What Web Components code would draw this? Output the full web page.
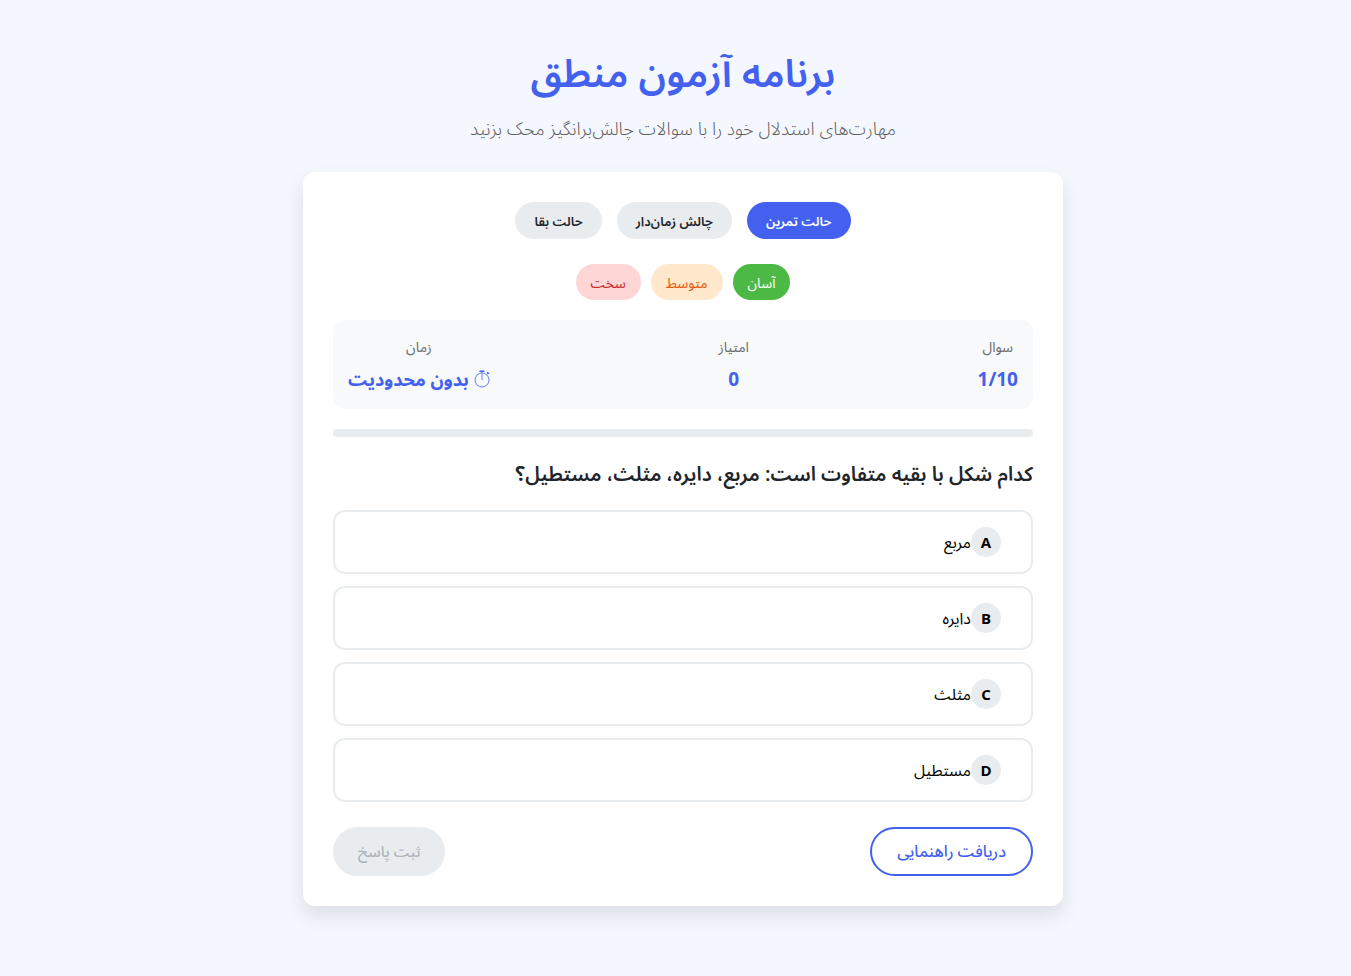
<!DOCTYPE html>
<html lang="fa" dir="rtl">
<head>
<meta charset="UTF-8">
<meta name="viewport" content="width=device-width, initial-scale=1.0">
<title>برنامه آزمون منطق</title>
<style>
  body {
    margin: 0;
    padding-left: 15px;
    min-height: 100vh;
    box-sizing: border-box;
    background-color: #f5f7ff;
    color: #212529;
    font-family: "Open Sans", "Noto Sans Arabic", "Noto Sans", "DejaVu Sans", sans-serif;
    font-size: 16px;
  }
</style>
</head>
<body>

<quiz-app>
  <quiz-header slot="header">
    <span slot="title">برنامه آزمون منطق</span>
    <span slot="subtitle">مهارت‌های استدلال خود را با سوالات چالش‌برانگیز محک بزنید</span>
  </quiz-header>

  <pill-group variant="modes">
    <pill-button variant="mode" active>حالت تمرین</pill-button>
    <pill-button variant="mode">چالش زمان‌دار</pill-button>
    <pill-button variant="mode">حالت بقا</pill-button>
  </pill-group>

  <pill-group variant="levels">
    <pill-button variant="easy">آسان</pill-button>
    <pill-button variant="medium">متوسط</pill-button>
    <pill-button variant="hard">سخت</pill-button>
  </pill-group>

  <quiz-stats>
    <stat-item label="سوال">1/10</stat-item>
    <stat-item label="امتیاز">0</stat-item>
    <stat-item label="زمان" timer>بدون محدودیت</stat-item>
  </quiz-stats>

  <quiz-progress value="0"></quiz-progress>

  <quiz-question>
    <span slot="question">کدام شکل با بقیه متفاوت است: مربع، دایره، مثلث، مستطیل؟</span>
    <quiz-option letter="A">مربع</quiz-option>
    <quiz-option letter="B">دایره</quiz-option>
    <quiz-option letter="C">مثلث</quiz-option>
    <quiz-option letter="D">مستطیل</quiz-option>
  </quiz-question>

  <quiz-actions>
    <action-button variant="outline">دریافت راهنمایی</action-button>
    <action-button disabled>ثبت پاسخ</action-button>
  </quiz-actions>
</quiz-app>

<script>
function define(name, html, setup) {
  const template = document.createElement('template');
  template.innerHTML = html;

  customElements.define(name, class extends HTMLElement {
    constructor() {
      super();
      this.attachShadow({ mode: 'open' });
      this.shadowRoot.appendChild(template.content.cloneNode(true));
    }

    connectedCallback() {
      if (setup) setup(this, this.shadowRoot);
    }
  });
}

define('quiz-app', `
  <style>
    :host {
      display: block;
      max-width: 760px;
      margin: 0 auto;
      padding: 40px 20px;
    }
    .card {
      background-color: #ffffff;
      border-radius: 12px;
      padding: 30px;
      box-shadow: 0 10px 20px rgba(0, 0, 0, 0.1);
    }
  </style>
  <slot name="header"></slot>
  <main class="card"><slot></slot></main>
`);

define('quiz-header', `
  <style>
    :host {
      display: block;
      text-align: center;
      margin-bottom: 30px;
    }
    h1 {
      margin: 0 0 10px;
      color: #4361ee;
      font-size: 39px;
      font-weight: 600;
      line-height: 64px;
    }
    p {
      margin: 0;
      color: #5c5c5c;
      font-size: 18px;
      font-weight: 300;
      line-height: 28px;
    }
  </style>
  <header>
    <h1><slot name="title"></slot></h1>
    <p><slot name="subtitle"></slot></p>
  </header>
`);

define('pill-group', `
  <style>
    :host {
      display: flex;
      flex-wrap: wrap;
      justify-content: center;
      gap: 10px;
      margin-bottom: 20px;
    }
    :host([variant="modes"]) {
      gap: 15px;
      margin-bottom: 25px;
    }
  </style>
  <slot></slot>
`);

define('pill-button', `
  <style>
    :host { display: block; }
    button {
      border: none;
      border-radius: 50px;
      padding: 9px 15px 7px;
      font: inherit;
      font-size: 14px;
      line-height: 20px;
      cursor: pointer;
    }
    :host([variant="mode"]) button {
      padding: 10px 19px 8px;
      font-size: 13px;
      line-height: 19px;
      font-weight: 600;
      background-color: #e9ecef;
      color: #212529;
    }
    :host([variant="mode"][active]) button {
      background-color: #4361ee;
      color: #ffffff;
    }
    :host([variant="easy"]) button { background-color: #4cb944; color: #ffffff; }
    :host([variant="medium"]) button { background-color: #ffe8cc; color: #e8590c; }
    :host([variant="hard"]) button { background-color: #ffd6d6; color: #c92a2a; }
  </style>
  <button type="button"><slot></slot></button>
`);

define('quiz-stats', `
  <style>
    :host {
      display: flex;
      justify-content: space-between;
      margin-bottom: 20px;
      padding: 15px;
      border-radius: 12px;
      background-color: #f8f9fa;
    }
  </style>
  <slot></slot>
`);

define('stat-item', `
  <style>
    :host {
      display: flex;
      flex-direction: column;
      align-items: center;
      gap: 5px;
    }
    .label {
      color: #6c6c6c;
      font-size: 14px;
      line-height: 24px;
    }
    .value {
      display: flex;
      align-items: center;
      gap: 5px;
      color: #4361ee;
      font-size: 19px;
      font-weight: 700;
      line-height: 30px;
    }
    svg { display: none; }
    :host([timer]) svg { display: block; }
    :host([timer]) .value { font-size: 18px; }
  </style>
  <span class="label"></span>
  <span class="value">
    <svg width="16" height="18" viewBox="0 0 16 18" fill="none" stroke="currentColor" aria-hidden="true">
      <circle cx="8" cy="10" r="7" stroke-width="0.8"/>
      <path d="M8 10V4" stroke-width="0.8"/>
      <path d="M5.5 1.2h5M13 2.2l2 1.6" stroke-width="1.4"/>
      <path d="M8 1.5v1.5M13.9 3l-1 1.4" stroke-width="0.8"/>
    </svg>
    <span><slot></slot></span>
  </span>
`, (host, root) => {
  root.querySelector('.label').textContent = host.getAttribute('label');
});

define('quiz-progress', `
  <style>
    :host {
      display: block;
      height: 8px;
      margin-bottom: 20px;
      border-radius: 4px;
      background-color: #e9ecef;
      overflow: hidden;
    }
    .bar {
      height: 100%;
      background-color: #4361ee;
    }
  </style>
  <div class="bar" role="progressbar" aria-valuemin="0" aria-valuemax="100"></div>
`, (host, root) => {
  const bar = root.querySelector('.bar');
  bar.style.width = `${host.getAttribute('value')}%`;
  bar.setAttribute('aria-valuenow', host.getAttribute('value'));
});

define('quiz-question', `
  <style>
    :host { display: block; margin-bottom: 25px; }
    h2 {
      margin: 0 0 20px;
      font-size: 20px;
      font-weight: 600;
      line-height: 33px;
    }
    .options {
      display: flex;
      flex-direction: column;
      gap: 12px;
    }
  </style>
  <h2><slot name="question"></slot></h2>
  <div class="options"><slot></slot></div>
`);

define('quiz-option', `
  <style>
    :host { display: block; }
    button {
      display: flex;
      align-items: center;
      width: 100%;
      padding: 15px 30px;
      border: 2px solid #e9ecef;
      border-radius: 12px;
      background-color: #ffffff;
      color: #000000;
      font: inherit;
      font-size: 16px;
      line-height: 24px;
      cursor: pointer;
    }
    .letter {
      display: flex;
      align-items: center;
      justify-content: center;
      width: 30px;
      height: 30px;
      border-radius: 50%;
      background-color: #e9ecef;
      font-size: 15px;
      font-weight: 700;
    }
  </style>
  <button type="button"><span class="letter"></span><span><slot></slot></span></button>
`, (host, root) => {
  root.querySelector('.letter').textContent = host.getAttribute('letter');
});

define('quiz-actions', `
  <style>
    :host {
      display: flex;
      justify-content: space-between;
    }
  </style>
  <slot></slot>
`);

define('action-button', `
  <style>
    :host { display: block; }
    button {
      padding: 12px 25px;
      border: none;
      border-radius: 50px;
      background-color: #4361ee;
      color: #ffffff;
      font: inherit;
      font-size: 15px;
      font-weight: 500;
      line-height: 25px;
      cursor: pointer;
    }
    :host([variant="outline"]) button {
      padding: 10px 25px;
      border: 2px solid #4361ee;
      background-color: #ffffff;
      color: #4361ee;
      font-size: 16px;
    }
    button:disabled {
      background-color: #e9ecef;
      color: #adb5bd;
      cursor: not-allowed;
    }
  </style>
  <button type="button"><slot></slot></button>
`, (host, root) => {
  root.querySelector('button').disabled = host.hasAttribute('disabled');
});
</script>
</body>
</html>
